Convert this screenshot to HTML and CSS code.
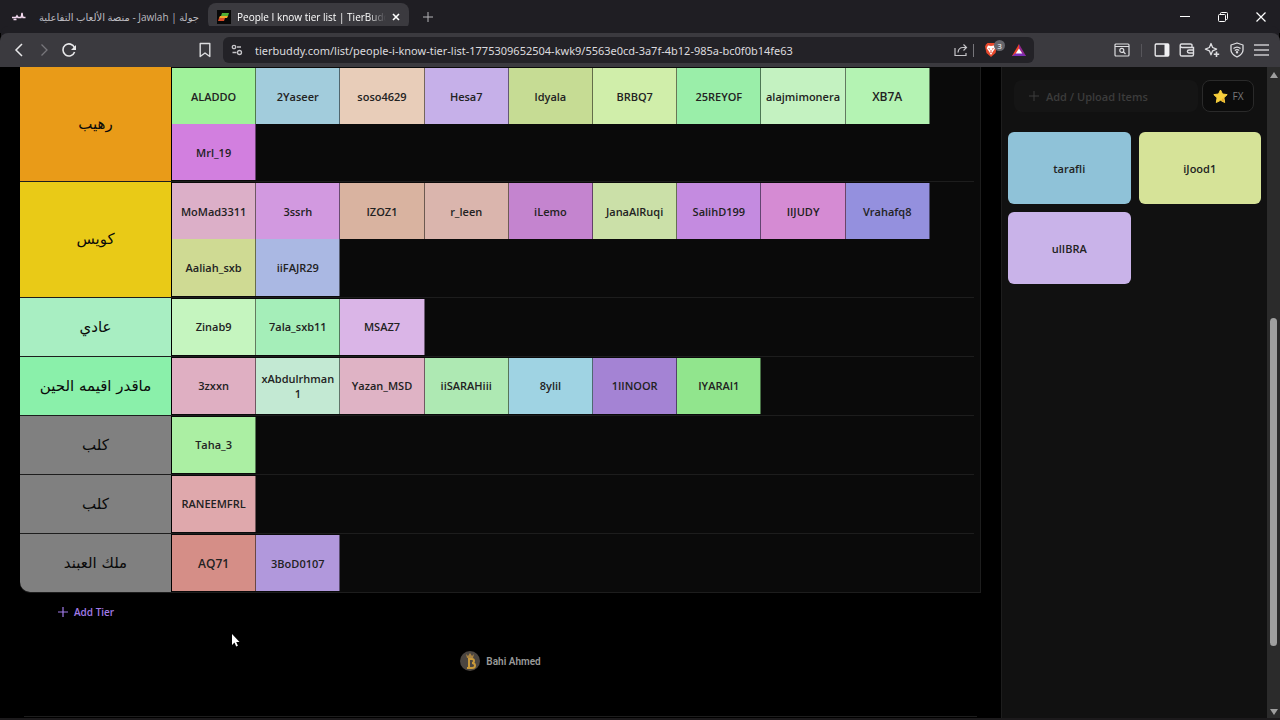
FILE: index.html
```html
<!DOCTYPE html>
<html lang="en">
<head>
  <meta charset="UTF-8">
  <meta name="viewport" content="width=device-width, initial-scale=1">
  <title>People I know tier list | TierBuddy</title>
  <link rel="stylesheet" href="styles.css">
</head>
<body>
  <!-- Tab strip -->
  <header class="tab-strip">
    <div class="tab">
      <svg class="favicon" viewBox="0 0 14 14"><path d="M0 7.500h4l1-1.500 1 1.500h3l1-3 1 3h2.500M1.500 9.500h3M9 4h2" fill="none" stroke="#f2d8ee" stroke-width="1.600"/></svg>
      <span class="tab-title" dir="rtl">جولة | Jawlah - منصة الألعاب التفاعلية</span>
    </div>
    <div class="tab active">
      <svg class="favicon" viewBox="0 0 14 14"><rect width="14" height="14" fill="#080808"/><path d="M5 3h7l-1 3H4z" fill="#4fae35"/><path d="M3 6h8l-1 2H2z" fill="#f0a72b"/><path d="M2 8h6l-1 3H1z" fill="#d94b28"/></svg>
      <span class="tab-title fade">People I know tier list | TierBuddy</span>
      <button class="tab-close" aria-label="Close tab"><svg width="8" height="8" viewBox="0 0 8 8"><path d="M1 1l6 6M7 1L1 7" stroke="#fff" stroke-width="1.600"/></svg></button>
    </div>
    <button class="icon-btn new-tab" aria-label="New tab"><svg width="10" height="10" viewBox="0 0 10 10"><path d="M5 0v10M0 5h10" stroke="#b5b4b8"/></svg></button>
    <div class="window-controls">
      <button aria-label="Minimize"><svg width="10" height="10" viewBox="0 0 10 10"><path d="M0 4.500h10" stroke="#fff"/></svg></button>
      <button aria-label="Restore"><svg width="10" height="10" viewBox="0 0 10 10" fill="none" stroke="#fff"><rect x=".5" y="2.500" width="7" height="7" rx="1"/><path d="M2.500 2.500v-1q0-1 1-1h5q1 0 1 1v5q0 1-1 1h-1"/></svg></button>
      <button aria-label="Close"><svg width="10" height="10" viewBox="0 0 10 10"><path d="M.5.5l9 9M9.500.5l-9 9" stroke="#fff" stroke-width="1.200"/></svg></button>
    </div>
  </header>

  <!-- Toolbar -->
  <nav class="toolbar">
    <div class="nav-left">
      <button class="icon-btn" aria-label="Back"><svg width="16" height="16" viewBox="0 0 16 16"><path d="M11 2L5 8l6 6" fill="none" stroke="#e8e8ea" stroke-width="1.500"/></svg></button>
      <button class="icon-btn" aria-label="Forward"><svg width="16" height="16" viewBox="0 0 16 16"><path d="M5.500 2.500L11 8l-5.500 5.500" fill="none" stroke="#77767b" stroke-width="1.300"/></svg></button>
      <button class="icon-btn" aria-label="Reload"><svg width="16" height="16" viewBox="0 0 16 16"><path d="M13.600 10A6 6 0 1 1 13.500 5.600" fill="none" stroke="#e8e8ea" stroke-width="1.600"/><path d="M15 3v5h-5z" fill="#e8e8ea"/></svg></button>
      <button class="icon-btn bookmark" aria-label="Bookmark"><svg width="14" height="16" viewBox="0 0 14 16"><path d="M2.200 1.500h9.600v13L7 11l-4.800 3.500z" fill="none" stroke="#dddde0" stroke-width="1.400" stroke-linejoin="round"/></svg></button>
    </div>
    <div class="address-bar">
      <button class="icon-btn" aria-label="Site information"><svg width="12" height="12" viewBox="0 0 12 12" fill="none" stroke="#c5c4c8" stroke-width="1.300"><circle cx="3" cy="3" r="1.700"/><path d="M6 3h4M1.500 8.500H5.500"/><circle cx="8.500" cy="8.500" r="2"/></svg></button>
      <input class="url" type="text" aria-label="Address" value="tierbuddy.com/list/people-i-know-tier-list-1775309652504-kwk9/5563e0cd-3a7f-4b12-985a-bc0f0b14fe63">
      <button class="icon-btn" aria-label="Share"><svg width="14" height="14" viewBox="0 0 14 14" fill="none" stroke="#c5c4c8" stroke-width="1.200"><path d="M1 5v7.500h11V10M4 9.500Q4.500 4.500 9 4.500h3M9.500 1.500l3 3-3 3"/></svg></button>
      <span class="divider light"></span>
      <button class="icon-btn shield" aria-label="Brave Shields">
        <svg width="16" height="16" viewBox="0 0 16 16"><path d="M4.500 1h7L13 2.500l1 2-1.500 6.500L8 15 3.500 11 2 4.500l1-2z" fill="#e8482c"/><path d="M5 3.500l3 .6 3-.6 1.300 2.700-2 2.800L8 13 5.700 9l-2-2.800z" fill="#fff"/><path d="M5.500 6.500l1.500.7M10.500 6.500L9 7.200M8 8v1.500M6.800 10.200h2.400" stroke="#e8482c" stroke-width=".9"/></svg>
        <span class="badge">3</span>
      </button>
      <button class="icon-btn rewards" aria-label="Rewards"><svg width="16" height="14" viewBox="0 0 16 14"><path d="M8 1L1 13h7z" fill="#f0442c"/><path d="M8 1l7 12H8z" fill="#93278f"/><path d="M1 13l4-3h6l4 3z" fill="#7b2fb5"/><path d="M8 5.500l3.300 5H4.700z" fill="#fff"/></svg></button>
    </div>
    <div class="nav-right">
      <button class="icon-btn" aria-label="Search tabs"><svg width="16" height="14" viewBox="0 0 16 14" fill="none" stroke="#dddde0" stroke-width="1.200"><rect x="1" y="1" width="14" height="12" rx="1"/><path d="M1 3.500h14M9.500 9l2 2"/><circle cx="7.800" cy="7.400" r="2"/></svg></button>
      <span class="divider"></span>
      <button class="icon-btn" aria-label="Sidebar"><svg width="16" height="14" viewBox="0 0 16 14"><rect x="1.200" y="1" width="13.600" height="12" rx="1" fill="none" stroke="#f0f0f2" stroke-width="1.300"/><path d="M10.500 1H15v12h-4.500z" fill="#f0f0f2"/></svg></button>
      <button class="icon-btn" aria-label="Wallet"><svg width="16" height="14" viewBox="0 0 16 14" fill="none" stroke="#dddde0" stroke-width="1.400"><path d="M13 4.500V2.200Q13 1 11.500 1h-9Q1.200 1 1.200 2.600v8.800Q1.200 13 3 13h10q1.500 0 1.500-1.500V4.500H3Q1.500 4.300 1.200 2.600"/><path d="M14.500 7H10q-1.600 0-1.600 1.400T10 10h4.500"/></svg></button>
      <button class="icon-btn" aria-label="Leo AI"><svg width="16" height="16" viewBox="0 0 16 16" fill="none" stroke="#dddde0" stroke-width="1.300" stroke-linejoin="round"><path d="M7 1.500l1.600 4 4 1.600-4 1.700L7 12.800 5.400 8.800l-4-1.700 4-1.600z"/><path d="M12.500 9.500v5.500M9.800 12.300h5.400" stroke-width="1.600"/></svg></button>
      <button class="icon-btn" aria-label="VPN"><svg width="16" height="16" viewBox="0 0 16 16" fill="none" stroke="#dddde0" stroke-width="1.300"><path d="M8 1l6 2v5q0 4-6 7Q2 12 2 8V3z" stroke-linejoin="round"/><path d="M4.500 6.500q3.500-2.800 7 0M5.800 8.400q2.200-1.700 4.400 0"/><circle cx="8" cy="10.300" r=".6"/></svg></button>
      <button class="icon-btn" aria-label="Menu"><svg width="15" height="12" viewBox="0 0 15 12"><path d="M0 1h15M0 6h15M0 11h15" stroke="#c9c8cc" stroke-width="1.300"/></svg></button>
    </div>
  </nav>

  <!-- Page -->
  <div class="page">
    <main class="content">
      <section class="board">
        <div class="tier">
          <div class="tier-label amazing" lang="ar" dir="rtl">رهيب</div>
          <ul class="tier-items">
            <li class="tile aladdo">ALADDO</li>
            <li class="tile yaseer">2Yaseer</li>
            <li class="tile soso">soso4629</li>
            <li class="tile hesa">Hesa7</li>
            <li class="tile ldyala">ldyala</li>
            <li class="tile brbq">BRBQ7</li>
            <li class="tile reyof">25REYOF</li>
            <li class="tile alajmi">alajmimonera</li>
            <li class="tile xb7a large">XB7A</li>
            <li class="tile mrl">Mrl_19</li>
          </ul>
        </div>
        <div class="tier">
          <div class="tier-label good" lang="ar" dir="rtl">كويس</div>
          <ul class="tier-items">
            <li class="tile momad">MoMad3311</li>
            <li class="tile ssrh">3ssrh</li>
            <li class="tile izoz">IZOZ1</li>
            <li class="tile rleen">r_leen</li>
            <li class="tile ilemo">iLemo</li>
            <li class="tile jana">JanaAlRuqi</li>
            <li class="tile salih">SalihD199</li>
            <li class="tile judy">IIJUDY</li>
            <li class="tile vrahaf">Vrahafq8</li>
            <li class="tile aaliah">Aaliah_sxb</li>
            <li class="tile fajr">iiFAJR29</li>
          </ul>
        </div>
        <div class="tier">
          <div class="tier-label normal" lang="ar" dir="rtl">عادي</div>
          <ul class="tier-items">
            <li class="tile zinab">Zinab9</li>
            <li class="tile ala">7ala_sxb11</li>
            <li class="tile msaz">MSAZ7</li>
          </ul>
        </div>
        <div class="tier">
          <div class="tier-label unrated" lang="ar" dir="rtl">ماقدر اقيمه الحين</div>
          <ul class="tier-items">
            <li class="tile zxxn">3zxxn</li>
            <li class="tile abdul">xAbdulrhman1</li>
            <li class="tile yazan">Yazan_MSD</li>
            <li class="tile sarah">iiSARAHiii</li>
            <li class="tile ylil">8ylil</li>
            <li class="tile noor">1IINOOR</li>
            <li class="tile yarai">IYARAI1</li>
          </ul>
        </div>
        <div class="tier">
          <div class="tier-label" lang="ar" dir="rtl">كلب</div>
          <ul class="tier-items">
            <li class="tile taha">Taha_3</li>
          </ul>
        </div>
        <div class="tier">
          <div class="tier-label" lang="ar" dir="rtl">كلب</div>
          <ul class="tier-items">
            <li class="tile raneem">RANEEMFRL</li>
          </ul>
        </div>
        <div class="tier">
          <div class="tier-label" lang="ar" dir="rtl">ملك العبند</div>
          <ul class="tier-items">
            <li class="tile aq large">AQ71</li>
            <li class="tile bod">3BoD0107</li>
          </ul>
        </div>
      </section>

      <button class="add-tier"><svg width="10" height="10" viewBox="0 0 10 10"><path d="M5 0v10M0 5h10" stroke="#a07be8" stroke-width="1.200"/></svg>Add Tier</button>

      <a class="author" href="#">
        <svg width="20" height="20" viewBox="0 0 20 20"><circle cx="10" cy="10" r="10" fill="#4b4540"/><path d="M6 3l2 2 2-3 2 3 2-2-1 4H7z" fill="#a98342"/><path d="M8 8h4q2 0 2 2t-2 2q3 0 3 2.500T12 17H7M9 8v9" fill="none" stroke="#c9993a" stroke-width="2"/></svg>
        Bahi Ahmed
      </a>
      <hr class="bottom-line">
    </main>

    <aside class="sidebar">
      <div class="sidebar-actions">
        <button class="upload" disabled><svg width="10" height="10" viewBox="0 0 10 10"><path d="M5 0v10M0 5h10" stroke="#3c3c3c"/></svg>Add / Upload Items</button>
        <button class="fx"><svg width="15" height="15" viewBox="0 0 15 15"><path d="M7.500 1l2 4 4.700.6-3.300 3.200.8 4.700-4.200-2.200-4.200 2.200.8-4.700L.8 5.600 5.500 5z" fill="#f7cf3c" stroke="#f7cf3c" stroke-linejoin="round"/><path d="M10 9l1.500 4-3-1.700z" fill="#eba62a"/></svg>FX</button>
      </div>
      <ul class="pool">
        <li class="card tarafli">tarafli</li>
        <li class="card ijood">iJood1</li>
        <li class="card ullbra">ulIBRA</li>
      </ul>
    </aside>

    <div class="scrollbar" aria-hidden="true">
      <span class="arrow up"></span>
      <span class="track-above"></span>
      <span class="thumb"></span>
      <span class="track-below"></span>
      <span class="arrow down"></span>
    </div>
  </div>

  <svg class="cursor" width="9" height="15" viewBox="0 0 9 15" aria-hidden="true"><path d="M1 1v11l2.500-2.400L5.200 13.500l1.700-.8-1.700-3.700H8.500z" fill="#fff"/></svg>
</body>
</html>
```
FILE: styles.css
```css
* {
  margin: 0;
  padding: 0;
  box-sizing: border-box;
}

body {
  height: 100vh;
  display: flex;
  flex-direction: column;
  overflow: hidden;
  background: #000;
  color: #fff;
  font-family: "Open Sans", "Noto Sans", "DejaVu Sans", sans-serif;
  font-size: 11px;
  border-bottom: 2px solid #1c1a1c;
}

button,
input {
  border: 0;
  background: none;
  color: inherit;
  font: inherit;
}

ul {
  list-style: none;
}

svg {
  display: block;
  flex: none;
}

/* === TABS === */
.tab-strip {
  flex: none;
  display: flex;
  align-items: center;
  height: 33px;
  padding-left: 3px;
  background: #1f1e23;
}

.tab {
  display: flex;
  align-items: center;
  gap: 10px;
  width: 205px;
  height: 27px;
  padding: 0 9px;
  border-radius: 8px;
  font-family: "Open Sans", "DejaVu Sans", sans-serif;
  font-size: 10px;
  color: #bdbcc1;
}

.tab.active {
  width: 201px;
  gap: 6px;
  background: #3b3a3f;
  color: #fff;
  font-weight: 500;
}

.favicon {
  width: 14px;
  height: 14px;
}

.tab-title {
  flex: 1;
  white-space: nowrap;
}

.tab-title.fade {
  min-width: 0;
  mask-image: linear-gradient(to right, #000 88%, transparent);
}

.tab-close {
  width: 8px;
}

.icon-btn {
  flex: none;
  display: flex;
  align-items: center;
  justify-content: center;
  width: 25px;
  height: 25px;
}

.new-tab {
  margin-left: 6px;
}

.window-controls {
  display: flex;
  margin-left: auto;
}

.window-controls button {
  display: flex;
  justify-content: center;
  width: 38px;
}

/* === TOOLBAR === */
.toolbar {
  flex: none;
  display: flex;
  align-items: center;
  height: 34px;
  background: #3b3a3f;
  border-radius: 8px 8px 0 0;
  box-shadow: 0 -8px 0 -1px #1f1e23;
}

.nav-left {
  display: flex;
  width: 223px;
  padding: 0 6px;
}

.bookmark {
  margin-left: auto;
}

.address-bar {
  flex: 1;
  display: flex;
  align-items: center;
  height: 26px;
  padding: 0 3px 0 1px;
  border-radius: 6px;
  background: #232227;
}

.url {
  flex: 1;
  min-width: 0;
  padding-left: 6px;
  color: #dcdbdf;
  font-family: "Noto Sans", sans-serif;
}

.nav-right {
  display: flex;
  align-items: center;
  justify-content: flex-end;
  width: 246px;
  padding-right: 6px;
}

.divider {
  width: 1px;
  height: 13px;
  margin: 0 7px;
  background: #57565b;
}

.divider.light {
  margin: 0 2px 0 0;
  background: #77767b;
}

.shield {
  position: relative;
  width: 30px;
}

.badge {
  position: absolute;
  top: 2px;
  right: 1px;
  width: 11px;
  height: 11px;
  border-radius: 50%;
  background: #66666c;
  font-size: 8px;
  line-height: 11px;
}

/* === PAGE === */
.page {
  flex: 1;
  display: flex;
  min-height: 0;
}

.content {
  flex: 1;
  display: flex;
  flex-direction: column;
  padding: 0 20px;
}

.board {
  border: solid #1d1d1d;
  border-width: 0 1px 1px 0;
  border-bottom-left-radius: 10px;
  padding-right: 6px;
  background: #0a0a0a;
}

.tier {
  display: flex;
  border-bottom: 1px solid #1d1d1d;
}

.tier:last-child {
  border-bottom: 0;
}

.tier-label {
  flex: none;
  display: flex;
  align-items: center;
  justify-content: center;
  width: 152px;
  border-right: 1px solid #000;
  background: #808080;
  color: #0a0a0a;
  font-family: "DejaVu Sans", sans-serif;
  font-size: 15px;
}

.tier:last-child .tier-label {
  border-bottom-left-radius: 10px;
}

.tier-items {
  flex: 1;
  display: flex;
  flex-wrap: wrap;
  padding: 1px 0;
}

.tile {
  display: flex;
  align-items: center;
  justify-content: center;
  width: 10.5%;
  aspect-ratio: 3 / 2;
  padding: 0 4px;
  border-right: 1px solid rgba(0, 0, 0, 0.5);
  color: #222;
  font-weight: 600;
  line-height: 15px;
  text-align: center;
  overflow-wrap: anywhere;
}

.tile.large {
  font-size: 12px;
}

/* tier colors */
.amazing { background: #e99b18; }
.good { background: #e9ca17; }
.normal { background: #a8eec2; }
.unrated { background: #8af0aa; }

/* item colors */
.aladdo { background: #a0f29b; }
.yaseer { background: #a2ccdc; }
.soso { background: #e8cdb9; }
.hesa { background: #c6b0e9; }
.ldyala { background: #c6dc94; }
.brbq { background: #d0eeaa; }
.reyof { background: #9aeea9; }
.alajmi { background: #c4f2c1; }
.xb7a { background: #b4f3b3; }
.mrl { background: #d27fdf; }
.momad { background: #dcafc8; }
.ssrh { background: #d299e0; }
.izoz { background: #d9b3a0; }
.rleen { background: #dab5ad; }
.ilemo { background: #c484cf; }
.jana { background: #cbe0a8; }
.salih { background: #c48be0; }
.judy { background: #d58bd3; }
.vrahaf { background: #9490de; }
.aaliah { background: #cfda93; }
.fajr { background: #aab8e3; }
.zinab { background: #c5f5bf; }
.ala { background: #a5eeb9; }
.msaz { background: #dab5e7; }
.zxxn { background: #dfafc2; }
.abdul { background: #c3e9d3; }
.yazan { background: #dfb3c5; }
.sarah { background: #aee9b3; }
.ylil { background: #9fd3e3; }
.noor { background: #a483d4; }
.yarai { background: #91e58d; }
.taha { background: #abefa3; }
.raneem { background: #dfa8ac; }
.aq { background: #d58e87; }
.bod { background: #b198dc; }
.tarafli { background: #8fc2d8; }
.ijood { background: #d6e398; }
.ullbra { background: #c9b3e9; }

.add-tier {
  display: flex;
  align-items: center;
  align-self: flex-start;
  gap: 6px;
  margin: 11px 0 0 38px;
  color: #a07be8;
  font-size: 10px;
  font-weight: 600;
  line-height: 16px;
}

.author {
  display: flex;
  align-items: center;
  align-self: center;
  gap: 6px;
  margin-top: 31px;
  color: #9a9a9a;
  font-family: Roboto, sans-serif;
  font-size: 10px;
  font-weight: 600;
  text-decoration: none;
}

.bottom-line {
  margin: auto 4px 1px;
  border: 0;
  border-top: 1px solid #1d1d1d;
}

/* === SIDEBAR === */
.sidebar {
  width: 266px;
  padding: 13px 6px 0;
  border-left: 1px solid #1d1d1d;
  background: #111;
}

.sidebar-actions {
  display: flex;
  gap: 4px;
  padding: 0 7px 0 6px;
}

.upload,
.fx {
  display: flex;
  align-items: center;
  height: 32px;
  border-radius: 8px;
}

.upload {
  flex: 1;
  gap: 7px;
  padding-left: 15px;
  background: #151515;
  color: #3c3c3c;
  font-weight: 600;
}

.fx {
  justify-content: center;
  gap: 5px;
  width: 52px;
  border: 1px solid #2a2a2a;
  background: #0c0c0c;
  color: #777;
  font-size: 10px;
}

.pool {
  display: grid;
  grid-template-columns: 1fr 1fr;
  gap: 8px;
  margin-top: 20px;
}

.card {
  display: flex;
  align-items: center;
  justify-content: center;
  height: 72px;
  border-radius: 6px;
  color: #222;
  font-weight: 600;
}

/* === SCROLLBAR === */
.scrollbar {
  display: flex;
  flex-direction: column;
  align-items: center;
  width: 13px;
  padding: 5px 0 3px;
  background: #2b2b2b;
}

.arrow {
  border: 4px solid transparent;
}

.arrow.up {
  border-top: 0;
  border-bottom: 6px solid #9f9f9f;
}

.arrow.down {
  border-bottom: 0;
  border-top: 6px solid #9f9f9f;
}

.track-above {
  flex: 240;
}

.thumb {
  flex: 328;
  width: 7px;
  border-radius: 4px;
  background: #9f9f9f;
}

.track-below {
  flex: 63;
}

.cursor {
  position: absolute;
  left: 231px;
  top: 633px;
}
```
